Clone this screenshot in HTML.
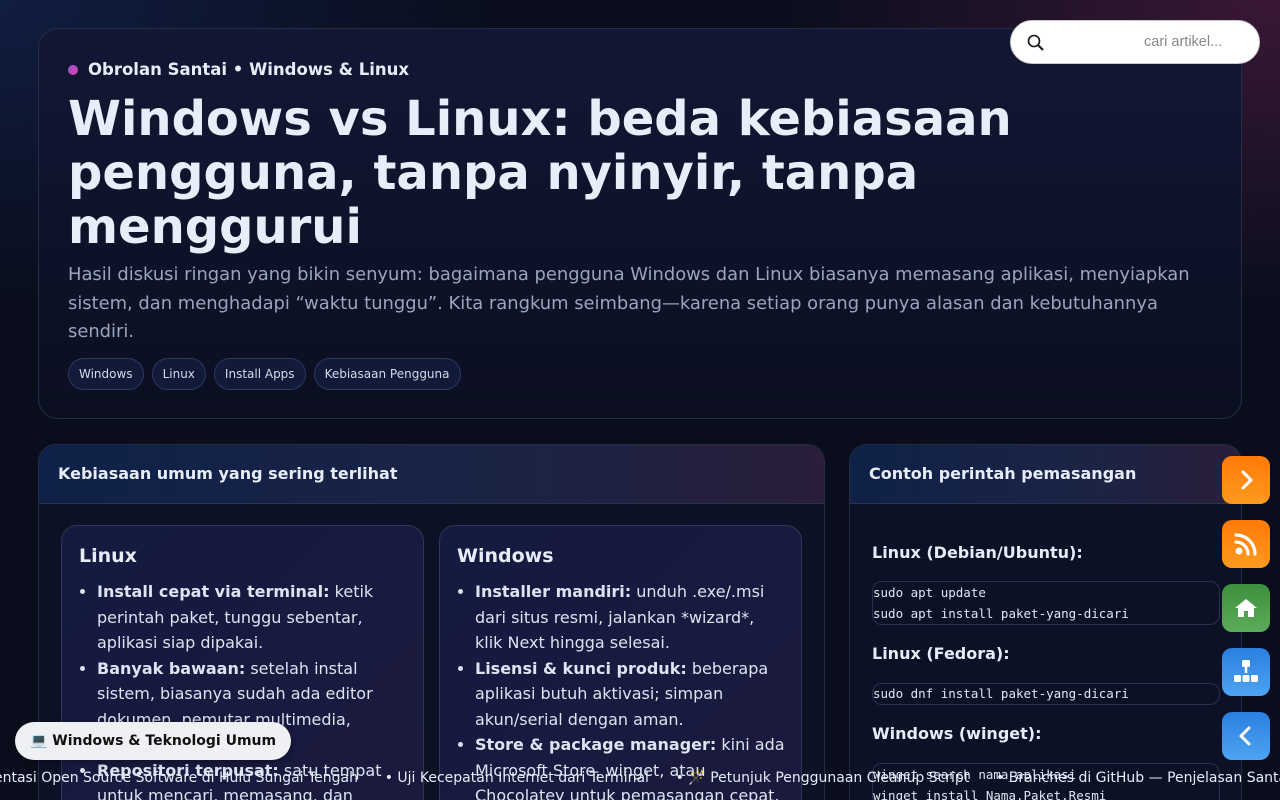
<!DOCTYPE html>
<html><head><meta charset="utf-8">
<style>
*{box-sizing:border-box;margin:0;padding:0}
html,body{width:1280px;height:800px;overflow:hidden}
body{font-family:"DejaVu Sans","Liberation Sans",sans-serif;color:#e6ecf8;
background:radial-gradient(ellipse 500px 300px at 1280px 0,rgba(90,30,70,.6),transparent),radial-gradient(ellipse 500px 300px at 0 0,rgba(20,40,90,.6),transparent),#0a0e1c;position:relative}
.hero{position:absolute;left:38px;top:28px;width:1204px;height:391px;border:1px solid #262c45;border-radius:20px;background:linear-gradient(180deg,#121735,#0b0f20);padding:0 30px}
.kick{position:absolute;left:29px;top:31px;font-weight:bold;font-size:16.5px;display:flex;align-items:center}
.kick i{width:10px;height:10px;border-radius:50%;background:linear-gradient(135deg,#a24fe0,#d2479c);margin-right:10px;display:inline-block}
h1{position:absolute;left:29px;top:63px;width:1000px;font-size:48px;line-height:54px;font-weight:bold;color:#e8edfa}
.desc{position:absolute;left:29px;top:232px;width:1140px;font-size:17.9px;line-height:28.5px;color:#9aa5bd}
.tags{position:absolute;left:29px;top:329px;display:flex;gap:8px}
.tags span{border:1px solid #2d3860;background:#121a3a;border-radius:17px;padding:0 10px;height:32px;line-height:30px;font-size:12px;color:#d3dae8}
.sec{position:absolute;top:444px;border:1px solid #262c45;border-bottom:none;border-radius:18px 18px 0 0;background:#0d1126;overflow:hidden;height:356px}
.sec .hd{height:59px;border-bottom:1px solid #2a3350;padding-left:19px;font-weight:bold;font-size:16px;line-height:58px;background:linear-gradient(90deg,#0f2148,#1b2445 60%,#2a1e3a)}
.l{left:38px;width:787px}.r{left:849px;width:393px}
.card{position:absolute;top:80px;width:363px;height:400px;border:1px solid #2e3658;border-radius:16px;background:linear-gradient(135deg,#141a40,#1d1a3e);padding:19px 8px 19px 17px}
.card h3{font-size:19px;font-weight:bold;margin-bottom:12px}
.card ul{padding-left:18px;font-size:16px;line-height:25.5px;color:#dde3f0}
.r h4{position:absolute;left:22px;font-size:16px;font-weight:bold}
.code{position:absolute;left:22px;width:348px;border:1px solid #2a3050;border-radius:10px;font-family:"DejaVu Sans Mono",monospace;font-size:12.5px;line-height:20.5px;color:#e0e6f2}
.fb{position:absolute;left:1222px;width:48px;height:48px;border-radius:10px;display:flex;align-items:center;justify-content:center}
.search{position:absolute;left:1010px;top:20px;width:250px;height:44px;background:#fff;border-radius:22px;border:1px solid #ccc}
.search span{position:absolute;left:133px;top:13px;font-family:"Liberation Sans",sans-serif;font-size:14.5px;color:#888}
.pill{position:absolute;left:15px;top:722px;width:276px;height:38px;border-radius:19px;background:#eef0f4;color:#111;font-weight:bold;font-size:14px;line-height:38px;padding-left:15px;box-shadow:0 2px 8px rgba(0,0,0,.4)}
.tick{position:absolute;top:770px;left:-6px;white-space:nowrap;font-size:14px;color:#e6ecf8}
</style></head><body>
<div class="hero">
<div class="kick"><i></i>Obrolan Santai • Windows &amp; Linux</div>
<h1>Windows vs Linux: beda kebiasaan pengguna, tanpa nyinyir, tanpa menggurui</h1>
<div class="desc">Hasil diskusi ringan yang bikin senyum: bagaimana pengguna Windows dan Linux biasanya memasang aplikasi, menyiapkan sistem, dan menghadapi “waktu tunggu”. Kita rangkum seimbang—karena setiap orang punya alasan dan kebutuhannya sendiri.</div>
<div class="tags"><span>Windows</span><span>Linux</span><span>Install Apps</span><span>Kebiasaan Pengguna</span></div>
</div>
<div class="sec l"><div class="hd">Kebiasaan umum yang sering terlihat</div>
<div class="card" style="left:22px"><h3>Linux</h3><ul>
<li><b>Install cepat via terminal:</b> ketik perintah paket, tunggu sebentar, aplikasi siap dipakai.</li>
<li><b>Banyak bawaan:</b> setelah instal sistem, biasanya sudah ada editor dokumen, pemutar multimedia, browser, dan lainnya.</li>
<li><b>Repositori terpusat:</b> satu tempat untuk mencari, memasang, dan memperbarui.</li></ul></div>
<div class="card" style="left:400px"><h3>Windows</h3><ul>
<li><b>Installer mandiri:</b> unduh .exe/.msi dari situs resmi, jalankan *wizard*,<br>klik Next hingga selesai.</li>
<li><b>Lisensi &amp; kunci produk:</b> beberapa aplikasi butuh aktivasi; simpan akun/serial dengan aman.</li>
<li><b>Store &amp; package manager:</b> kini ada Microsoft Store, winget, atau Chocolatey untuk pemasangan cepat.</li></ul></div>
</div>
<div class="sec r"><div class="hd">Contoh perintah pemasangan</div>
<h4 style="top:98px">Linux (Debian/Ubuntu):</h4>
<div class="code" style="top:136px;height:44px;padding-top:1px">sudo apt update<br>sudo apt install paket-yang-dicari</div>
<h4 style="top:199px">Linux (Fedora):</h4>
<div class="code" style="top:238px;height:22px;line-height:20px">sudo dnf install paket-yang-dicari</div>
<h4 style="top:279px">Windows (winget):</h4>
<div class="code" style="top:318px;height:44px;padding-top:1px">winget search nama_aplikasi<br>winget install Nama.Paket.Resmi</div>
</div>
<div class="search"><svg style="position:absolute;left:16px;top:13px" width="18" height="18" viewBox="0 0 18 18"><circle cx="7" cy="7" r="5.5" fill="none" stroke="#111" stroke-width="1.6"/><path d="M11 11l5 5" stroke="#111" stroke-width="2"/></svg><span>cari artikel...</span></div>
<div class="fb" style="top:456px;background:linear-gradient(#ff7a0a,#ff9a1f)"><svg width="24" height="24" viewBox="0 0 24 24"><path d="M9 4l8 8-8 8" fill="none" stroke="#fff" stroke-width="3" stroke-linecap="round" stroke-linejoin="round"/></svg></div>
<div class="fb" style="top:520px;background:linear-gradient(#ff7a0a,#ff9a1f)"><svg width="28" height="28" viewBox="0 0 28 28"><circle cx="7" cy="21" r="3.5" fill="#fff"/><path d="M4 12a12 12 0 0 1 12 12M4 5a19 19 0 0 1 19 19" fill="none" stroke="#fff" stroke-width="3.2" stroke-linecap="round"/></svg></div>
<div class="fb" style="top:584px;background:linear-gradient(#3d8f3e,#5cab5a)"><svg width="28" height="28" viewBox="0 0 28 28"><path d="M14 5L3 14h3v9h6v-6h4v6h6v-9h3z" fill="#fff"/></svg></div>
<div class="fb" style="top:648px;background:linear-gradient(#2a7fe0,#4fa3f2)"><svg width="32" height="32" viewBox="0 0 32 32"><rect x="12" y="4" width="8" height="7" rx="1.5" fill="#fff"/><path d="M16 11v6" stroke="#fff" stroke-width="2.5"/><rect x="4" y="19" width="7" height="7" rx="1.5" fill="#fff"/><rect x="12.5" y="19" width="7" height="7" rx="1.5" fill="#fff"/><rect x="21" y="19" width="7" height="7" rx="1.5" fill="#fff"/></svg></div>
<div class="fb" style="top:712px;background:linear-gradient(#2a7fe0,#4fa3f2)"><svg width="24" height="24" viewBox="0 0 24 24"><path d="M15 4l-8 8 8 8" fill="none" stroke="#fff" stroke-width="3" stroke-linecap="round" stroke-linejoin="round"/></svg></div>
<div class="pill">💻 Windows &amp; Teknologi Umum</div>
<div class="tick">entasi Open Source Software di Hulu Sungai Tengah &nbsp;&nbsp;&nbsp;&nbsp; • Uji Kecepatan Internet dari Terminal &nbsp;&nbsp;&nbsp;&nbsp; • 🪄 Petunjuk Penggunaan Cleanup Script &nbsp;&nbsp;&nbsp;&nbsp; • Branches di GitHub — Penjelasan Santai</div>
</body></html>
